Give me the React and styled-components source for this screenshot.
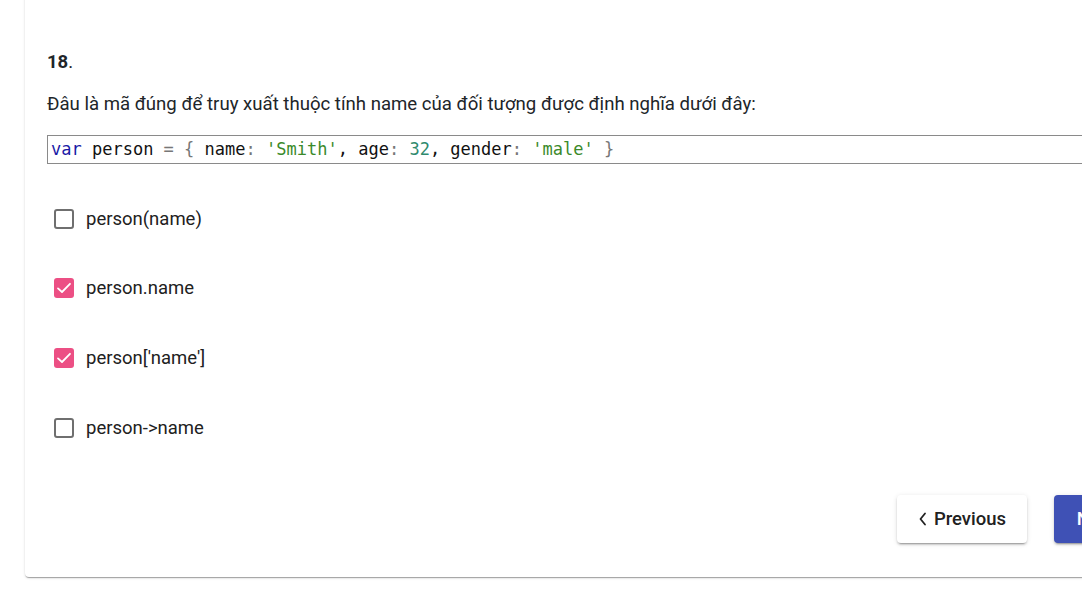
import React from "react";
import styled, { createGlobalStyle } from "styled-components";

const GlobalStyle = createGlobalStyle`
  html, body {
    margin: 0;
    padding: 0;
    background: #fff;
    overflow: hidden;
  }
  body {
    font-family: Roboto, "Noto Sans", Arial, sans-serif;
    color: #212529;
  }
`;

const Page = styled.div`
  width: 1082px;
  height: 594px;
  overflow: hidden;
  padding-left: 25px;
  box-sizing: border-box;
`;

const Card = styled.div`
  width: 1150px;
  margin-top: -12px;
  padding: 62px 21px 34px 22px;
  box-sizing: border-box;
  background: #fff;
  border-radius: 4px;
  box-shadow: 0 2px 1px -1px rgba(0, 0, 0, 0.2), 0 1px 1px 0 rgba(0, 0, 0, 0.14),
    0 1px 3px 0 rgba(0, 0, 0, 0.12);
`;

const Number = styled.div`
  font-size: 18.5px;
  line-height: 24px;
  height: 24px;
  & > b {
    font-weight: 700;
  }
`;

const Question = styled.div`
  margin-top: 18px;
  font-size: 18.6px;
  line-height: 24px;
`;

const Code = styled.pre`
  margin: 19px 0 0;
  height: 29px;
  box-sizing: border-box;
  border: 1px solid #8a8a8a;
  padding: 0 3px;
  font-family: "DejaVu Sans Mono", "Liberation Mono", monospace;
  font-size: 17px;
  line-height: 27px;
  color: #111;
`;

const Tok = styled.span`
  color: ${(p) =>
    p.$k === "kw" ? "#1a1aa6" : p.$k === "str" ? "#3b8a2b" : p.$k === "num" ? "#2f8a6e" : p.$k === "op" ? "#777" : "#111"};
`;

const Options = styled.div`
  margin-top: 20px;
  display: flex;
  flex-direction: column;
`;

const Option = styled.label`
  height: 69.6px;
  display: flex;
  align-items: center;
  gap: 12px;
  padding-left: 7px;
  font-size: 18.5px;
  color: #212121;
`;

const Box = styled.span`
  width: 20px;
  height: 20px;
  box-sizing: border-box;
  border-radius: 3px;
  display: flex;
  align-items: center;
  justify-content: center;
  border: ${(p) => (p.$checked ? "none" : "2px solid #6f6f6f")};
  background: ${(p) => (p.$checked ? "#ec4f84" : "#fff")};
`;

const Footer = styled.div`
  margin-top: 33px;
  display: flex;
  justify-content: flex-end;
  gap: 27px;
`;

const Button = styled.button`
  height: 48px;
  width: ${(p) => (p.$primary ? "100px" : "130px")};
  border: none;
  border-radius: 4px;
  display: flex;
  align-items: center;
  justify-content: center;
  gap: 6px;
  font-family: Roboto, Arial, sans-serif;
  font-size: 18.5px;
  font-weight: 500;
  background: ${(p) => (p.$primary ? "#3f51b5" : "#fff")};
  color: ${(p) => (p.$primary ? "#fff" : "#212121")};
  box-shadow: 0 3px 1px -2px rgba(0, 0, 0, 0.2), 0 2px 2px 0 rgba(0, 0, 0, 0.14),
    0 1px 5px 0 rgba(0, 0, 0, 0.12);
`;

const Check = () => (
  <svg width="18" height="18" viewBox="0 0 18 18">
    <path d="M3 9.4 L7 13 L15 4.8" fill="none" stroke="#fff" strokeWidth="1.8" strokeLinecap="round" strokeLinejoin="round" />
  </svg>
);

const Chevron = ({ dir }) => (
  <svg width="10" height="16" viewBox="0 0 10 16">
    <path
      d={dir === "left" ? "M7 2.5 L2.5 8 L7 13.5" : "M3 2.5 L7.5 8 L3 13.5"}
      fill="none"
      stroke="currentColor"
      strokeWidth="1.8"
      strokeLinecap="round"
      strokeLinejoin="round"
    />
  </svg>
);

const options = [
  { text: "person(name)", checked: false },
  { text: "person.name", checked: true },
  { text: "person['name']", checked: true },
  { text: "person->name", checked: false },
];

const App = () => {
  return (
    <Page>
      <GlobalStyle />
      <Card>
        <Number>
          <b>18</b>.
        </Number>
        <Question>
          Đâu là mã đúng để truy xuất thuộc tính name của đối tượng được định nghĩa dưới đây:
        </Question>
        <Code>
          <Tok $k="kw">var</Tok> person <Tok $k="op">=</Tok> <Tok $k="op">{"{"}</Tok> name<Tok $k="op">:</Tok>{" "}
          <Tok $k="str">'Smith'</Tok>, age<Tok $k="op">:</Tok> <Tok $k="num">32</Tok>, gender<Tok $k="op">:</Tok>{" "}
          <Tok $k="str">'male'</Tok> <Tok $k="op">{"}"}</Tok>
        </Code>
        <Options>
          {options.map((o) => (
            <Option key={o.text}>
              <Box $checked={o.checked}>{o.checked && <Check />}</Box>
              {o.text}
            </Option>
          ))}
        </Options>
        <Footer>
          <Button>
            <Chevron dir="left" />
            Previous
          </Button>
          <Button $primary>
            Next
            <Chevron dir="right" />
          </Button>
        </Footer>
      </Card>
    </Page>
  );
};

export default App;
